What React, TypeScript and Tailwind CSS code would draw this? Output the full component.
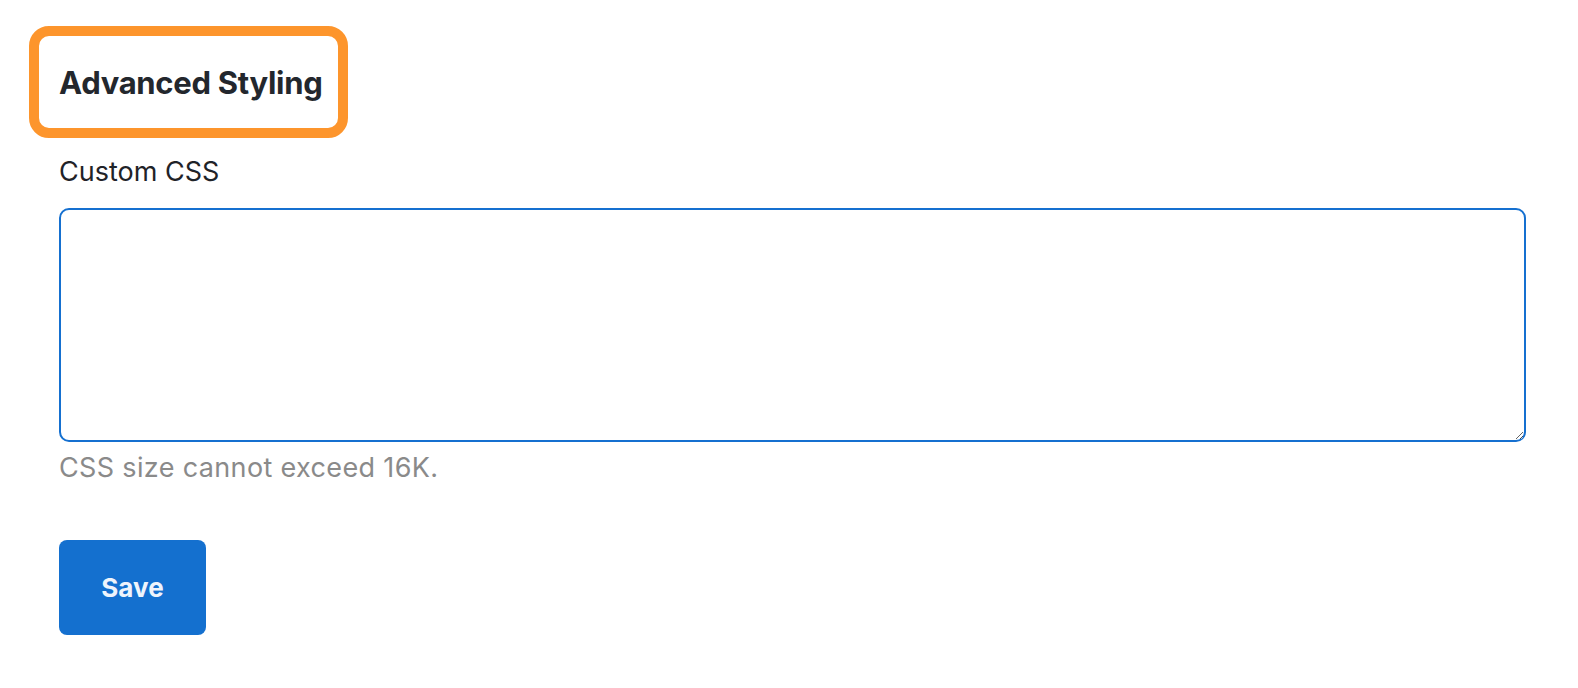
import React from "react";

const App = () => {
  return (
    <div className="min-h-screen bg-white pl-[59px] pr-[52px] pt-[26px] font-['Inter','Liberation_Sans',sans-serif]">
      {/* Heading, highlighted */}
      <div className="-ml-[30px] inline-flex h-[112px] items-center rounded-[20px] border-[10px] border-[#fd952c] pl-[20px] pr-[16px]">
        <h2 className="text-[31px] font-bold leading-none tracking-[-0.3px] text-[#23272d]">Advanced Styling</h2>
      </div>

      {/* Custom CSS field */}
      <div className="mt-[16px]">
        <label className="block text-[27px] leading-[36px] text-[#1f2328]">Custom CSS</label>
        <textarea className="mt-[18px] block h-[234px] w-full resize-y rounded-[10px] border-2 border-[#1570d0] bg-white p-3 outline-none" />
        <p className="mt-[8px] text-[27px] leading-[36px] tracking-[0.35px] text-[#8a8a8a]">CSS size cannot exceed 16K.</p>
      </div>

      <button className="mt-[54px] h-[95px] w-[147px] rounded-[8px] bg-[#1470cf] text-[26px] font-bold text-[#eef4fc]">
        Save
      </button>
    </div>
  );
};

export default App;
